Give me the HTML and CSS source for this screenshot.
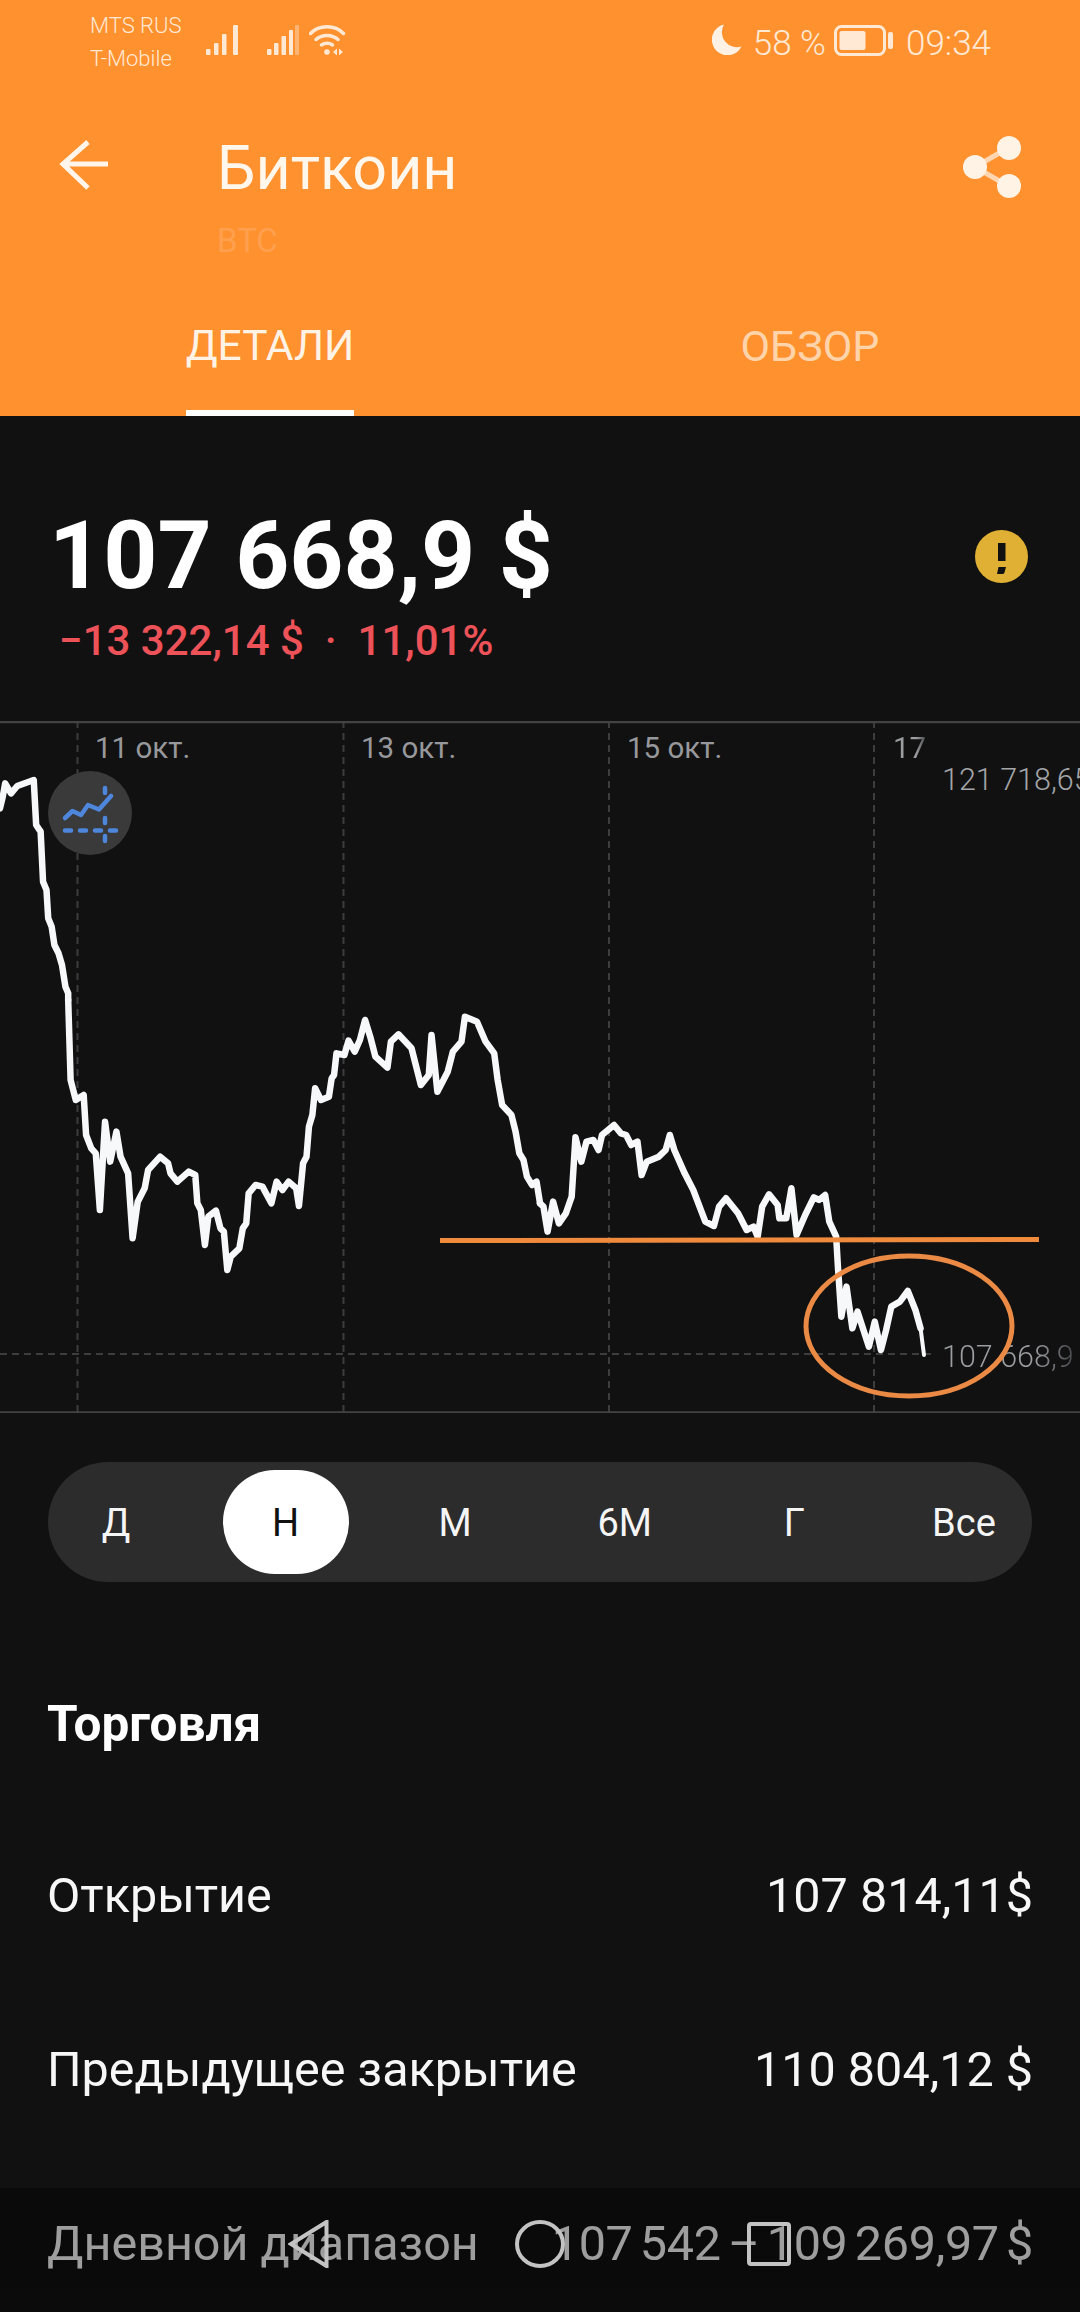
FILE: index.html
```html
<!DOCTYPE html>
<html lang="ru">
<head>
<meta charset="utf-8">
<title>Биткоин</title>
<link rel="stylesheet" href="styles.css">
</head>
<body>
<div class="screen">
  <header class="app-head">
    <div class="status">
      <div class="carriers"><span>MTS RUS</span><span>T-Mobile</span></div>
      <svg class="signal-a" viewBox="0 0 32 30"><rect x="0" y="24" width="4.5" height="6" rx="1"/><rect x="8" y="18" width="4.5" height="12" rx="1"/><rect x="16" y="9" width="4.5" height="21" rx="1"/><rect x="27" y="0" width="5" height="30" rx="1"/></svg>
      <svg class="signal-b" viewBox="0 0 32 30"><rect x="0" y="24" width="4.5" height="6" rx="1"/><rect x="7" y="18" width="4.5" height="12" rx="1"/><rect x="14.5" y="11" width="4.5" height="19" rx="1"/><rect x="22" y="5" width="4" height="25" rx="1"/><rect class="dim" x="28" y="0" width="4" height="30" rx="1"/></svg>
      <svg class="wifi" viewBox="0 0 38 30"><path class="arc" d="M1.5 8.5C10 -0.5 26 -0.5 34.5 8.5"/><path class="arc" d="M7 14.5C13 9 23 9 29 14.5"/><path class="arc" d="M12.5 20C15.5 17.8 20.5 17.8 23.5 20"/><circle cx="18" cy="27" r="2.8"/><path d="M24 27l4-3.5v7zM30 23.5l4 3.5-4 3.5z"/></svg>
      <div class="status-right">
        <svg class="moon" viewBox="0 0 30 31"><path d="M12 0.5A15.6 15.6 0 1 0 29.5 22.5A15 15 0 0 1 12 0.5Z"/></svg>
        <span class="pct">58 %</span>
        <svg class="battery" viewBox="0 0 59 31"><rect class="shell" x="1.5" y="1.5" width="49" height="28" rx="6"/><rect x="5.500" y="6" width="26" height="19" rx="2"/><rect x="54" y="7" width="5" height="17" rx="2"/></svg>
        <span class="clock">09:34</span>
      </div>
    </div>
    <div class="toolbar">
      <svg class="back" viewBox="0 0 52 50"><path d="M50 24H6M30 2L5 24l25 24"/></svg>
      <div class="titles">
        <h1>Биткоин</h1>
        <p>BTC</p>
      </div>
      <svg class="share" viewBox="0 0 60 62"><path class="share-link" d="M46 12L13 31l33 19"/><circle cx="47" cy="12" r="12"/><circle cx="13" cy="31" r="12"/><circle cx="47" cy="50" r="12"/></svg>
    </div>
    <nav class="tabs">
      <div class="tab"><span class="tab-label active">ДЕТАЛИ</span></div>
      <div class="tab"><span class="tab-label">ОБЗОР</span></div>
    </nav>
  </header>

  <main class="content">
    <section class="summary">
      <div class="price-row">
        <div class="price">107 668,9 $</div>
        <svg class="warn" viewBox="0 0 53 53"><circle cx="26.500" cy="26.500" r="26.500"/><path class="bang" d="M23 13h7.500v18h-7.500zM23.500 37h7.500l-1.500 5.500q-.6 1.500-2 1.500h-5.500z"/></svg>
      </div>
      <div class="change">−13 322,14 $ &nbsp;· &nbsp;11,01%</div>
    </section>

    <section class="chart">
      <span class="tick tick-11">11 окт.</span>
      <span class="tick tick-13">13 окт.</span>
      <span class="tick tick-15">15 окт.</span>
      <span class="tick tick-17 faded">17</span>
      <span class="level level-high">121 718,65</span>
      <span class="level level-low faded">107 668,9</span>
      <svg class="plot" viewBox="0 721 1080 692">
        <g class="grid">
          <path d="M77.500 721V1413M343.500 721V1413M609 721V1413M874 721V1413"/>
          <path d="M0 1354H935"/>
        </g>
        <path class="frame" d="M0 722H1080M0 1412.500H1080"/>
        <g transform="translate(0 700) scale(.3444 .3333)">
          <polyline class="line" points="0,325 8,290 15,250 32,280 50,258 98,240 105,375 118,395 125,545 135,570 140,655 150,680 158,735 170,760 180,795 190,860 198,880 198,900"/>
        </g>
        <g transform="translate(0 1000) scale(.3444 .3333)">
          <polyline class="line" points="198,0 205,240 220,300 243,285 250,405 265,445 278,460 290,630 305,365 320,485 338,395 350,470 372,520 385,715 400,605 420,565 430,510 465,470 488,490 495,520 515,545 548,515 567,525 573,610 583,630 595,735 605,650 627,632 640,685 650,695 660,810 670,770 695,745 705,685 715,670 722,580 742,555 762,560 788,610 803,545 820,570 838,545 860,565 868,618 880,490 890,470 897,380 907,345 915,265 932,300 955,290 963,235 970,225 977,160 1000,165 1012,122 1030,155 1045,120 1060,60 1075,110 1090,170 1125,203 1135,125 1157,103 1195,145 1222,255 1245,225 1253,105 1270,275 1300,215 1315,155 1340,125 1350,50 1385,65 1410,125 1435,160 1445,240 1458,315 1485,345 1497,395 1508,460 1520,480 1530,530 1545,555 1558,545 1568,610"/>
        </g>
        <g transform="translate(540 1000) scale(.3444 .3333)">
          <polyline class="line" points="0,610 10,620 22,695 38,605 55,670 75,640 92,590 103,412 120,485 135,425 155,420 170,450 180,405 215,375 235,400 250,405 265,435 283,425 295,525 310,485 345,470 365,450 377,405 390,450 420,520 445,570 480,665 505,678 520,620 540,595 575,640 600,690 620,680 632,710 645,620 665,583 690,615 695,655 715,655 730,565 745,705 770,645 795,592 810,600 828,585 840,665 860,710 865,800 875,950 890,860 907,985 922,935 955,1040 972,965 990,1050 1005,990 1020,920 1045,905 1068,873 1090,930 1105,985"/>
          <polyline class="line line-tail" points="1105,985 1115,1065"/>
        </g>
        <path class="mark" d="M440 1240.500L1039 1239.500"/>
        <ellipse class="mark mark-ring" cx="909" cy="1326" rx="103" ry="70"/>
      </svg>
      <button class="tool" type="button" aria-label="Индикаторы">
        <svg viewBox="0 0 84 84"><polyline class="tool-line" points="17,47 24.500,40 33,44 40,34 51,38.500 63,25"/><path class="tool-dash" d="M17 59.500h6M32 59.500h6M47 59.500h6M62 59.500h6M57 17v5M57 47v5M57 65v5"/></svg>
      </button>
    </section>

    <section class="periods">
      <span class="period">Д</span>
      <span class="period selected">Н</span>
      <span class="period">М</span>
      <span class="period">6М</span>
      <span class="period">Г</span>
      <span class="period">Все</span>
    </section>

    <section class="trade">
      <h2>Торговля</h2>
      <div class="row"><span>Открытие</span><span>107 814,11$</span></div>
      <div class="row"><span>Предыдущее закрытие</span><span>110 804,12 $</span></div>
      <div class="row"><span>Дневной диапазон</span><span class="range">107 542 – 109 269,97 $</span></div>
    </section>
  </main>

  <div class="navbar">
    <svg class="nav-back" viewBox="0 0 41 48"><path d="M38.500 2L3 24l35.500 22z"/></svg>
    <svg class="nav-home" viewBox="0 0 50 48"><ellipse cx="25" cy="24" rx="23" ry="22"/></svg>
    <svg class="nav-recent" viewBox="0 0 44 44"><rect x="2" y="2" width="40" height="40" rx="2"/></svg>
  </div>
</div>
</body>
</html>
```
FILE: styles.css
```css
* { box-sizing: border-box; }
html, body { margin: 0; padding: 0; background: #111112; }
body { font-family: Roboto, "Noto Sans", "Liberation Sans", sans-serif; color: #fff; }
h1, h2, p { margin: 0; font-weight: inherit; }

.screen { position: relative; width: 1080px; height: 2312px; overflow: hidden; }

/* Header */
.app-head { height: 416px; background: #ff912f; display: flex; flex-direction: column; }
.status { height: 80px; display: flex; align-items: flex-start; padding: 10px 89px 0 90px; color: #ffe9d4; }
.status svg { fill: #ffe9d4; flex: none; }
.carriers { display: flex; flex-direction: column; width: 116px; margin-top: -1px; font-size: 22px; line-height: 33px; font-weight: 300; }
.signal-a { width: 32px; height: 30px; margin-top: 15px; }
.signal-b { width: 32px; height: 30px; margin: 15px 0 0 29px; }
.signal-b .dim { opacity: .4; }
.wifi { width: 38px; height: 30px; margin: 15px 0 0 10px; }
.wifi .arc { fill: none; stroke: #ffe9d4; stroke-width: 3.500; stroke-linecap: round; }
.status-right { margin-left: auto; display: flex; align-items: center; height: 62px; }
.moon { width: 30px; height: 31px; fill: #fff1e4 !important; margin: -3px 11px 0 0; }
.pct, .clock { font-size: 35px; line-height: 40px; font-weight: 300; padding-top: 6px; }
.battery { width: 59px; height: 31px; margin: -2px 13px 0 8px; }
.battery .shell { fill: none; stroke: #ffe9d4; stroke-width: 3; }

.toolbar { height: 196px; display: flex; align-items: flex-start; padding: 0 58px 0 58px; }
.back { width: 52px; height: 50px; margin-top: 60px; fill: none; stroke: #fff5ea; stroke-width: 5; flex: none; }
.titles { margin-left: 107px; flex: 1; }
.titles h1 { margin-top: 54px; font-size: 61px; line-height: 68px; font-weight: 400; color: #fff6ec; }
.titles p { margin-top: 19px; font-size: 33px; line-height: 40px; color: #ffa04e; }
.share { width: 60px; height: 62px; margin-top: 56px; fill: #fff3e6; flex: none; }
.share-link { fill: none; stroke: #ffd6b0; stroke-width: 5; }

.tabs { flex: 1; display: grid; grid-template-columns: 1fr 1fr; }
.tab { display: flex; justify-content: center; align-items: flex-end; }
.tab-label { font-size: 43px; line-height: 48px; padding-bottom: 46px; color: #ffd4ab; }
.tab-label.active { font-size: 42.500px; color: #fff3e6; border-bottom: 6px solid #fff; padding-bottom: 40px; }

/* Summary */
.summary { height: 305px; padding: 94px 52px 0 49px; }
.price-row { display: flex; justify-content: space-between; align-items: center; }
.price { font-size: 94.500px; line-height: 92px; font-weight: 700; }
.warn { width: 53px; height: 53px; fill: #dfb033; flex: none; }
.warn .bang { fill: #111112; }
.change { margin-top: 14px; margin-left: 10px; font-size: 42px; line-height: 50px; font-weight: 500; color: #ec5258; }

/* Chart */
.chart { position: relative; height: 692px; overflow: hidden; }
.plot { position: absolute; inset: 0; width: 1080px; height: 692px; display: block; }
.grid path { fill: none; stroke: #3d3d3e; stroke-width: 2; stroke-dasharray: 7 5; }
.frame { fill: none; stroke: #434344; stroke-width: 2.500; }
.line { fill: none; stroke: #f6f8f9; stroke-width: 6.500; stroke-linejoin: round; stroke-linecap: round; vector-effect: non-scaling-stroke; }
.line-tail { stroke-width: 4; }
.mark { fill: none; stroke: #f08b3d; stroke-width: 5; }
.mark-ring { stroke: #ea8a45; }
.tick, .level { position: absolute; white-space: nowrap; color: #97989b; }
.tick { top: 9px; font-size: 29.500px; line-height: 36px; }
.tick-11 { left: 95px; }
.tick-13 { left: 361px; }
.tick-15 { left: 627px; }
.tick-17 { left: 893px; }
.level { left: 942px; font-size: 30.500px; line-height: 36px; font-weight: 300; color: #a4a5a8; }
.level-high { top: 41px; }
.level-low { top: 618px; }
.faded { background: linear-gradient(90deg, #9c9da0 70%, #46474a 100%); -webkit-background-clip: text; background-clip: text; color: transparent; }
.tool { position: absolute; left: 48px; top: 50px; width: 84px; height: 84px; padding: 0; border: 0; border-radius: 50%; background: #3a3a3b; }
.tool svg { display: block; width: 84px; height: 84px; fill: none; }
.tool-line { stroke: #4e86dc; stroke-width: 4.500; stroke-linecap: round; stroke-linejoin: round; }
.tool-dash { stroke: #4e86dc; stroke-width: 4.500; stroke-linecap: round; }

/* Period selector */
.periods { margin: 49px 48px 0 48px; height: 120px; padding: 8px 5px; border-radius: 60px; background: #2c2c2d; display: flex; justify-content: space-between; }
.period { width: 126px; display: flex; align-items: center; justify-content: center; padding-top: 2px; font-size: 38px; color: #f5f5f5; border-radius: 52px; }
.period.selected { background: #fff; color: #111; }

/* Trading table */
.trade { margin-top: 115px; padding: 0 47px 0 47px; }
.trade h2 { font-size: 49.500px; line-height: 54px; font-weight: 700; margin-bottom: 57px; }
.row { height: 174px; display: flex; justify-content: space-between; align-items: center; font-size: 48.500px; color: #f7f7f7; }
.range { word-spacing: -4.500px; letter-spacing: -.3px; }

/* System navigation */
.navbar { position: absolute; left: 0; right: 0; bottom: 0; height: 124px; background: rgba(0, 0, 0, .36); display: flex; align-items: center; padding: 0 0 12px 288px; }
.navbar svg { fill: none; stroke: #c3c3c3; stroke-width: 4; flex: none; }
.nav-back { width: 41px; height: 48px; margin-right: 186px; }
.nav-home { width: 50px; height: 48px; margin-right: 182px; }
.nav-recent { width: 44px; height: 44px; }
```
